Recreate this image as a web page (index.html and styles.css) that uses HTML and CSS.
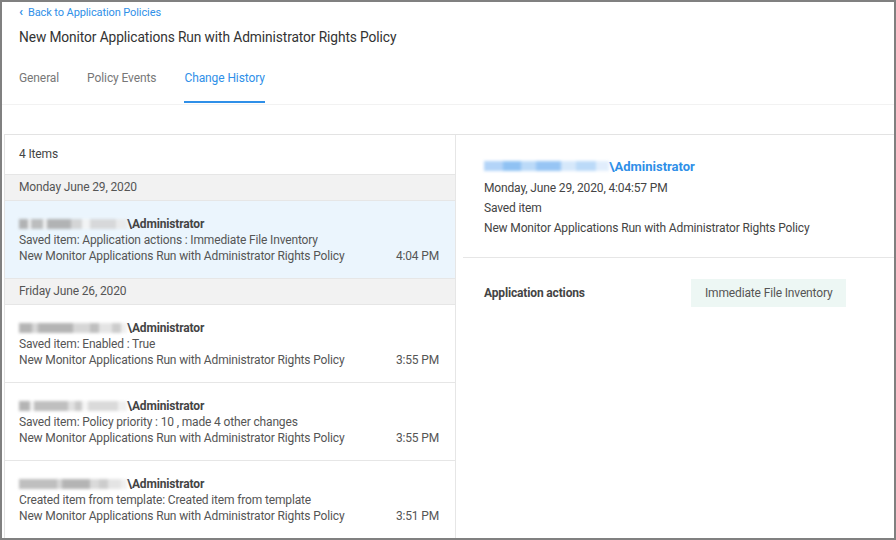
FILE: index.html
```html
<!DOCTYPE html>
<html>
<head>
<meta charset="utf-8">
<link rel="stylesheet" href="styles.css">
</head>
<body>
<div class="frame">
  <header class="head">
    <a class="back"><span class="chev">‹</span>Back to Application Policies</a>
    <h1 class="title">New Monitor Applications Run with Administrator Rights Policy</h1>
    <nav class="tabs">
      <span class="tab">General</span>
      <span class="tab">Policy Events</span>
      <span class="tab active">Change History</span>
    </nav>
  </header>
  <div class="content">
    <section class="list">
      <div class="count">4 Items</div>
      <div class="day">Monday June 29, 2020</div>
      <div class="item selected">
        <div class="who"><span class="blur b1"></span>\Administrator</div>
        <div class="line">Saved item: Application actions : Immediate File Inventory</div>
        <div class="line row"><span>New Monitor Applications Run with Administrator Rights Policy</span><span>4:04 PM</span></div>
      </div>
      <div class="day">Friday June 26, 2020</div>
      <div class="item">
        <div class="who"><span class="blur b2"></span>\Administrator</div>
        <div class="line">Saved item: Enabled : True</div>
        <div class="line row"><span>New Monitor Applications Run with Administrator Rights Policy</span><span>3:55 PM</span></div>
      </div>
      <div class="item">
        <div class="who"><span class="blur b3"></span>\Administrator</div>
        <div class="line">Saved item: Policy priority : 10 , made 4 other changes</div>
        <div class="line row"><span>New Monitor Applications Run with Administrator Rights Policy</span><span>3:55 PM</span></div>
      </div>
      <div class="item">
        <div class="who"><span class="blur b4"></span>\Administrator</div>
        <div class="line">Created item from template: Created item from template</div>
        <div class="line row"><span>New Monitor Applications Run with Administrator Rights Policy</span><span>3:51 PM</span></div>
      </div>
    </section>
    <section class="detail">
      <div class="summary">
        <div class="dwho"><span class="blur bblue"></span>\Administrator</div>
        <div class="dline">Monday, June 29, 2020, 4:04:57 PM</div>
        <div class="dline">Saved item</div>
        <div class="dline">New Monitor Applications Run with Administrator Rights Policy</div>
      </div>
      <div class="prop">
        <span class="plabel">Application actions</span>
        <span class="chip">Immediate File Inventory</span>
      </div>
    </section>
  </div>
</div>
</body>
</html>
```
FILE: styles.css
```css
* { box-sizing: border-box; }
html, body { margin: 0; padding: 0; background: #fff; }
body { font-family: Roboto, "Noto Sans", Arial, sans-serif; color: #555; }
.frame {
  width: 896px; height: 540px;
  border: 2px solid #808080;
  overflow: hidden;
  display: flex; flex-direction: column;
  background: #fff;
}
.head { padding: 0 0 0 17px; border-bottom: 1px solid #f2f2f2; height: 103px; flex: none; }
.back { display: flex; align-items: center; font-size: 11px; color: #2f8fe8; margin-top: 3px; height: 14px; letter-spacing: -0.1px; }
.chev { font-size: 13px; margin-right: 5px; font-weight: bold; line-height: 12px; }
.title { margin: 9px 0 0; font-size: 13.75px; font-weight: 400; color: #333; line-height: 18px; letter-spacing: -0.1px; }
.tabs { display: flex; gap: 28px; margin-top: 23px; }
.tab { font-size: 12px; color: #777; height: 34px; line-height: 16px; padding-top: 1px; letter-spacing: -0.1px; }
.tab.active { color: #2f8fe8; border-bottom: 2px solid #2f8fe8; }
.content { display: flex; margin: 29px 0 0 2px; border-top: 1px solid #e3e3e3; flex: 1; }
.list { width: 452px; border-left: 1px solid #e3e3e3; border-right: 1px solid #e6e6e6; font-size: 12px; letter-spacing: -0.15px; }
.count { height: 40px; padding: 12px 0 0 14px; color: #444; border-bottom: 1px solid #e6e6e6; }
.day { height: 26px; background: #f2f2f2; padding: 5px 0 0 14px; color: #555; border-bottom: 1px solid #e6e6e6; }
.item { height: 78px; padding: 15px 16px 0 14px; border-bottom: 1px solid #e6e6e6; line-height: 16px; }
.item.selected { background: #ebf5fd; }
.who { font-weight: 700; color: #444; display: flex; align-items: center; }
.row { display: flex; justify-content: space-between; }
.blur { display: inline-block; height: 10px; filter: blur(1.6px); opacity: 0.85; }
.b1 { width: 108px; background: linear-gradient(90deg, #a8a8a8 0 8%, #f4f4f4 8% 11%, #b4b4b4 11% 22%, #f0f0f0 22% 26%, #a8a8a8 26% 48%, #d0d0d0 48% 58%, #f4f4f4 58% 66%, #d4d4d4 66% 90%, #eaeaea 90% 100%); }
.b2 { width: 108px; background: linear-gradient(90deg, #a8a8a8 0 12%, #d0d0d0 12% 18%, #a8a8a8 18% 50%, #d0d0d0 50% 66%, #b4b4b4 66% 74%, #e0e0e0 74% 86%, #c4c4c4 86% 94%, #eeeeee 94% 100%); }
.b3 { width: 108px; background: linear-gradient(90deg, #a8a8a8 0 10%, #f4f4f4 10% 14%, #b4b4b4 14% 45%, #dcdcdc 45% 52%, #c0c0c0 52% 58%, #f4f4f4 58% 64%, #d4d4d4 64% 92%, #eeeeee 92% 100%); }
.b4 { width: 108px; background: linear-gradient(90deg, #b4b4b4 0 35%, #d0d0d0 35% 40%, #a8a8a8 40% 66%, #d4d4d4 66% 74%, #c4c4c4 74% 82%, #e0e0e0 82% 94%, #eeeeee 94% 100%); }
.bblue { width: 125px; background: linear-gradient(90deg, #a6cdf7 0 15%, #7db8f2 15% 30%, #b0d4f7 30% 42%, #86bcf3 42% 62%, #cfe4fa 62% 74%, #b0d4f7 74% 90%, #dcebfc 90% 100%); }
.detail { flex: 1; font-size: 12px; letter-spacing: -0.15px; }
.summary { padding: 21px 0 19px 21px; border-bottom: 1px solid #e6e6e6; margin-left: 7px; }
.dwho { font-size: 13px; letter-spacing: 0; font-weight: 700; color: #2f8fe8; display: flex; align-items: center; height: 20px; margin-bottom: 2px; }
.dline { line-height: 20px; color: #444; }
.prop { display: flex; align-items: center; padding: 21px 0 0 28px; }
.plabel { width: 207px; font-weight: 700; color: #444; }
.chip { background: #edf7f4; color: #555; padding: 0 14px; height: 28px; line-height: 28px; }
```
